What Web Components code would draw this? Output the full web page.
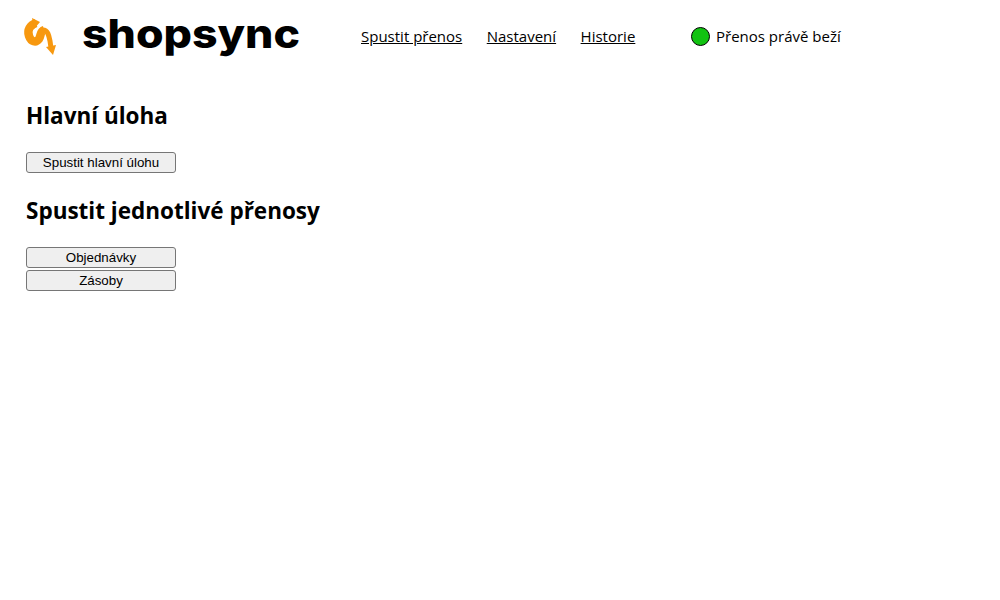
<!DOCTYPE html>
<html>
<head>
<meta charset="utf-8">
<title>shopsync</title>
<style>
  body { margin: 0; background: #fff; color: #000; font-family: "Open Sans", "Noto Sans", sans-serif; }
</style>
</head>
<body>
<app-header></app-header>
<main-panel></main-panel>
<script>
class AppHeader extends HTMLElement {
  constructor () {
    super()
    const shadow = this.attachShadow({ mode: 'open' })
    shadow.innerHTML = `
      <style>
        :host { display: flex; align-items: center; height: 72px; font-size: 15px; }
        .logo { display: flex; align-items: center; width: 361px; flex: none; }
        svg { display: block; margin-left: 22px; flex: none; }
        .brand { margin: 0 0 4px 24px; font: 800 40px/50px Inter, sans-serif; transform: scaleX(1.115); transform-origin: left; }
        nav { display: flex; gap: 24.5px; width: 330px; flex: none; }
        a { color: #000; text-decoration: underline; }
        status-dot { flex: none; }
      </style>
      <div class="logo">
        <svg width="36" height="40" viewBox="0 0 36 40">
          <path d="M14 7 C8 9 5 14 7 20 C9 26 14 27 17 23 C19 20 18 15 22 14" fill="none" stroke="#f7980f" stroke-width="8.5"/>
          <path d="M21 14 C26 14 27 20 28 25 L29 32" fill="none" stroke="#f7980f" stroke-width="5"/>
          <path d="M10 2 L18 6 L12 13 Z M24 31 L34 29 L31 39 Z" fill="#f7980f"/>
        </svg>
        <span class="brand">shopsync</span>
      </div>
      <nav>
        <a href="#">Spustit přenos</a>
        <a href="#">Nastavení</a>
        <a href="#">Historie</a>
      </nav>
      <status-dot>Přenos právě beží</status-dot>
    `
  }
}

class StatusDot extends HTMLElement {
  constructor () {
    super()
    const shadow = this.attachShadow({ mode: 'open' })
    shadow.innerHTML = `
      <style>
        :host { display: flex; align-items: center; gap: 6px; }
        .dot { width: 17px; height: 17px; border: 1px solid #000; border-radius: 50%; background: #12c312; }
      </style>
      <span class="dot"></span><slot></slot>
    `
  }
}

class TaskSection extends HTMLElement {
  constructor () {
    super()
    const shadow = this.attachShadow({ mode: 'open' })
    shadow.innerHTML = `
      <style>
        :host { display: block; }
        h2 { margin: 0 0 20px; font-size: 22.5px; line-height: 32px; font-weight: 700; }
        .items { display: flex; flex-direction: column; gap: 2px; align-items: flex-start; }
      </style>
      <h2></h2>
      <div class="items"><slot></slot></div>
    `
    this.titleEl = shadow.querySelector('h2')
  }

  connectedCallback () {
    this.titleEl.textContent = this.getAttribute('title')
  }
}

class TaskButton extends HTMLElement {
  constructor () {
    super()
    const shadow = this.attachShadow({ mode: 'open' })
    shadow.innerHTML = `
      <style>
        :host { display: block; }
        button {
          display: block; width: 150px; height: 21px; padding: 0;
          font: 13.333px "Liberation Sans", Arial, sans-serif; color: #000;
          background: #efefef; border: 1px solid #767676; border-radius: 3px;
        }
      </style>
      <button><slot></slot></button>
    `
  }
}

class MainPanel extends HTMLElement {
  constructor () {
    super()
    const shadow = this.attachShadow({ mode: 'open' })
    shadow.innerHTML = `
      <style>
        :host { display: flex; flex-direction: column; gap: 22px; padding: 28px 26px 0; }
      </style>
      <task-section title="Hlavní úloha">
        <task-button>Spustit hlavní úlohu</task-button>
      </task-section>
      <task-section title="Spustit jednotlivé přenosy">
        <task-button>Objednávky</task-button>
        <task-button>Zásoby</task-button>
      </task-section>
    `
  }
}

customElements.define('status-dot', StatusDot)
customElements.define('app-header', AppHeader)
customElements.define('task-button', TaskButton)
customElements.define('task-section', TaskSection)
customElements.define('main-panel', MainPanel)
</script>
</body>
</html>
